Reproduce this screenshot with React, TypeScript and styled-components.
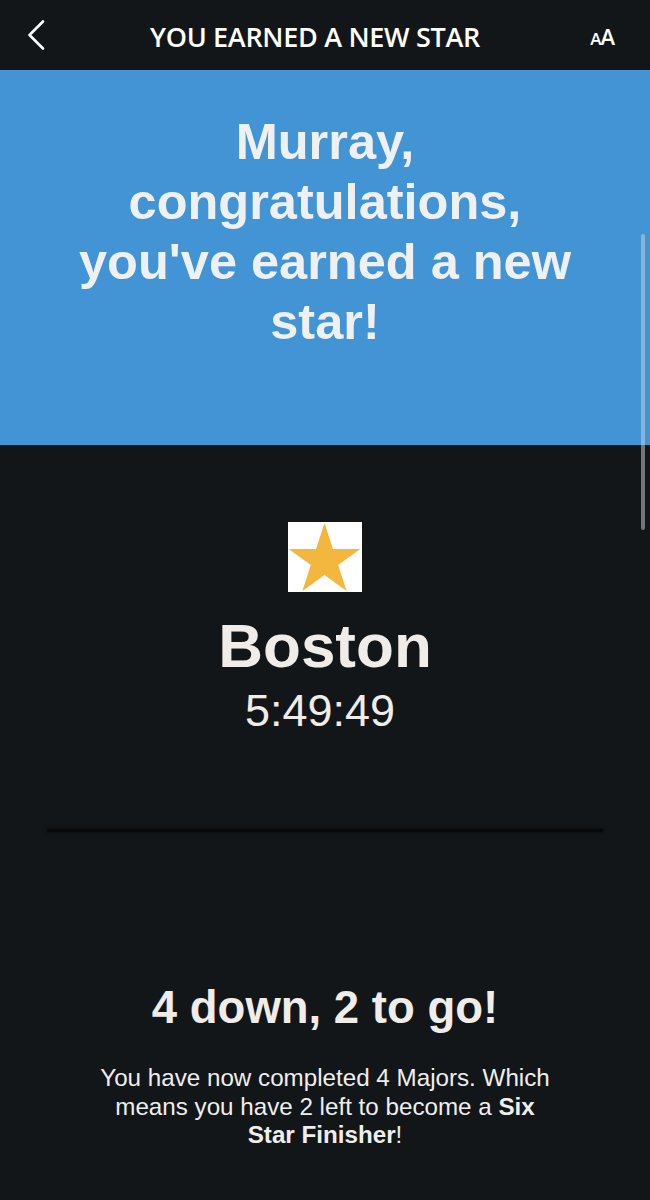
import React from "react";
import styled, { createGlobalStyle } from "styled-components";

const GlobalStyle = createGlobalStyle`
  html, body { margin: 0; padding: 0; background: #131619; }
  body { font-family: "Liberation Sans", Arial, sans-serif; -webkit-font-smoothing: antialiased; }
  * { box-sizing: border-box; }
`;

const Screen = styled.div`
  position: relative;
  width: 650px;
  height: 1200px;
  overflow: hidden;
  background: #131619;
`;

const Header = styled.header`
  height: 70px;
  display: grid;
  grid-template-columns: 60px 1fr 80px;
  align-items: center;
  background: #131619;
`;

const IconButton = styled.button<{ $align?: "start" | "end" }>`
  border: 0;
  background: none;
  padding: 0;
  color: #ffffff;
  display: flex;
  justify-content: ${(p) => (p.$align === "end" ? "flex-end" : "flex-start")};
  align-items: center;
  height: 70px;
  padding-left: ${(p) => (p.$align === "end" ? "0" : "26px")};
  padding-right: ${(p) => (p.$align === "end" ? "35px" : "0")};
  cursor: pointer;
`;

const Title = styled.h1`
  margin: 0;
  text-align: center;
  white-space: nowrap;
  color: #ffffff;
  font-family: "Open Sans", "Noto Sans", sans-serif;
  font-weight: 600;
  font-size: 27px;
  letter-spacing: -0.3px;
  transform: translateY(1px);
`;

const TextSize = styled.span`
  display: inline-flex;
  align-items: baseline;
  font-family: "Open Sans", "Noto Sans", sans-serif;
  font-weight: 600;
  color: #ffffff;
  line-height: 1;
  transform: translateY(1px);
`;

const SmallA = styled.span`
  font-size: 17px;
  margin-right: -1px;
`;

const BigA = styled.span`
  font-size: 22px;
`;

const Banner = styled.section`
  background: #4394d4;
  padding: 42px 60px 93px;
`;

const BannerHeading = styled.h2`
  margin: 0;
  text-align: center;
  color: #eef0f2;
  font-family: "Liberation Sans", Arial, sans-serif;
  font-weight: 700;
  font-size: 50.5px;
  line-height: 60px;
`;

const Body = styled.main`
  display: flex;
  flex-direction: column;
  align-items: center;
  padding-top: 77px;
  color: #efece9;
`;

const StarBadge = styled.div`
  width: 74px;
  height: 70px;
  background: #ffffff;
  display: flex;
  align-items: center;
  justify-content: center;
`;

const RaceName = styled.div`
  margin-top: 19px;
  font-weight: 700;
  font-size: 62px;
  line-height: 70px;
`;

const RaceTime = styled.div`
  margin-top: 5px;
  font-weight: 400;
  font-size: 45px;
  line-height: 50px;
  transform: translateX(-5px);
`;

const Divider = styled.hr`
  align-self: stretch;
  margin: 93px 47px 0;
  border: 0;
  height: 3px;
  border-radius: 2px;
  background: #060809;
  box-shadow: 0 0 3px 1px rgba(0, 0, 0, 0.45);
`;

const Progress = styled.div`
  margin-top: 150px;
  font-weight: 700;
  font-size: 45.5px;
  line-height: 52px;
`;

const Message = styled.p`
  margin: 30px 0 0;
  max-width: 470px;
  text-align: center;
  font-size: 24.2px;
  line-height: 28.5px;
  color: #eeeeee;

  strong {
    font-weight: 700;
  }
`;

const ScrollThumb = styled.div`
  position: absolute;
  right: 5px;
  top: 234px;
  width: 4px;
  height: 296px;
  border-radius: 2px;
  background: rgba(205, 212, 220, 0.5);
`;

function ChevronLeft() {
  return (
    <svg width="20" height="32" viewBox="0 0 20 32" fill="none">
      <path d="M17 2.5 L3.5 16 L17 29.5" stroke="#ffffff" strokeWidth="2.6" strokeLinecap="round" strokeLinejoin="round" />
    </svg>
  );
}

function Star() {
  return (
    <svg width="74" height="70" viewBox="0 0 74 70">
      <polygon
        points="36.5,1 44.9,27 72.3,27 50.2,43 58.6,69 36.5,53 14.4,69 22.8,43 0.7,27 28.1,27"
        fill="#f3b73f"
      />
    </svg>
  );
}

export default function App() {
  return (
    <>
      <GlobalStyle />
      <Screen>
        <Header>
          <IconButton aria-label="Back">
            <ChevronLeft />
          </IconButton>
          <Title>YOU EARNED A NEW STAR</Title>
          <IconButton $align="end" aria-label="Text size">
            <TextSize>
              <SmallA>A</SmallA>
              <BigA>A</BigA>
            </TextSize>
          </IconButton>
        </Header>
        <Banner>
          <BannerHeading>Murray, congratulations, you've earned a new star!</BannerHeading>
        </Banner>
        <Body>
          <StarBadge>
            <Star />
          </StarBadge>
          <RaceName>Boston</RaceName>
          <RaceTime>5:49:49</RaceTime>
          <Divider />
          <Progress>4 down, 2 to go!</Progress>
          <Message>
            You have now completed 4 Majors. Which means you have 2 left to become a <strong>Six Star Finisher</strong>!
          </Message>
        </Body>
        <ScrollThumb />
      </Screen>
    </>
  );
}
